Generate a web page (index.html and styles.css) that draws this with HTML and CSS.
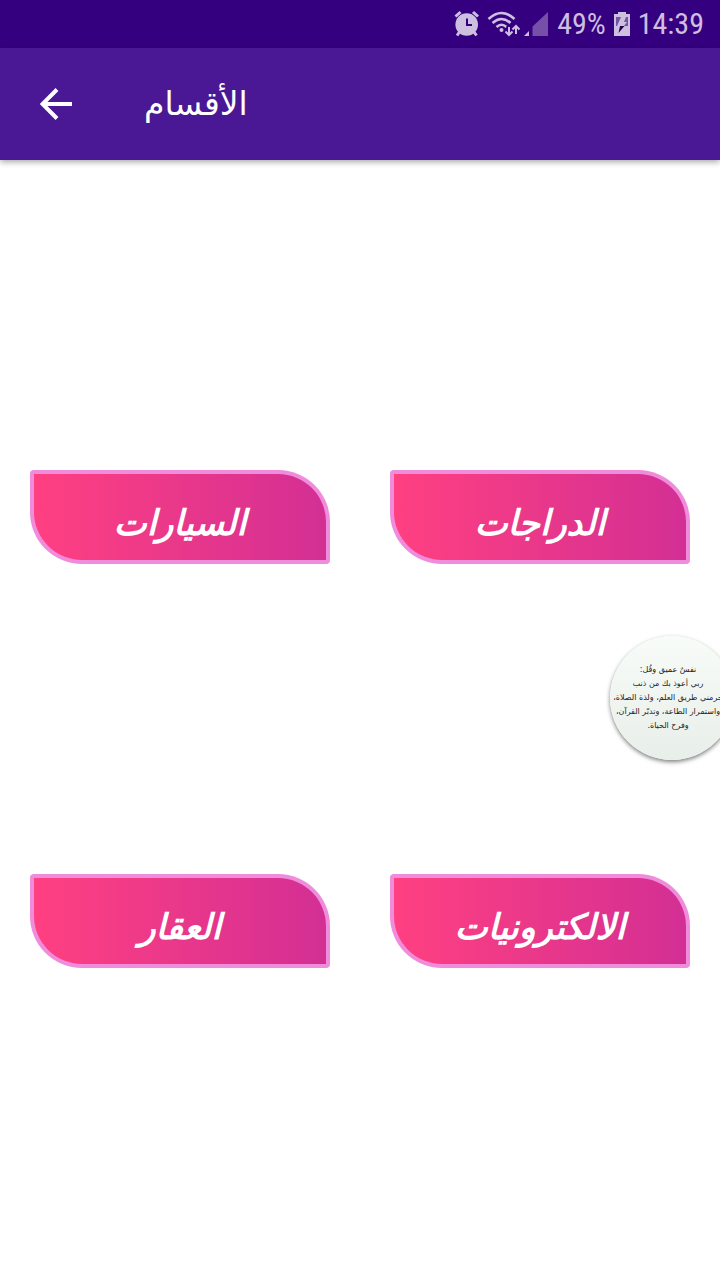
FILE: index.html
```html
<!DOCTYPE html>
<html lang="ar">
<head>
<meta charset="utf-8">
<meta name="viewport" content="width=device-width, initial-scale=1">
<title>الأقسام</title>
<link rel="stylesheet" href="styles.css">
</head>
<body>
<div class="status">
  <svg class="status-icons" width="96" height="28" viewBox="0 0 96 28" aria-hidden="true">
    <g fill="none" stroke="#cdbfe0">
      <path stroke-width="3" d="M2.500 6.500 7.500 2M25 6.500 20 2M6.500 22 4 25.500M21 22l2.500 3.500"/>
      <path stroke-width="2.600" d="M35.500 9Q48.500-3 61.500 9M39.500 13Q48.500 5 57.500 13M43.500 17Q48.500 12.500 53.500 17"/>
    </g>
    <path d="M56 16v9M63 16v9" stroke="#350080" stroke-width="5"/>
    <path d="M56 17v8M52.500 21.500 56 25l3.500-3.500M63 24v-8M59.500 19.500 63 16l3.500 3.500" fill="none" stroke="#cdbfe0" stroke-width="2"/>
    <circle cx="13.700" cy="14.500" r="11.300" fill="#cdbfe0"/>
    <path d="M14 8.500V15h5" fill="none" stroke="#350080" stroke-width="2"/>
    <circle cx="48.500" cy="20" r="2" fill="#cdbfe0"/>
    <path d="M76 21v5h-5z" fill="#cdbfe0"/>
    <path d="M95 2v24H79.500V16.500z" fill="#7650a8"/>
  </svg>
  <span class="reading">49%</span>
  <svg class="battery" width="16" height="24" viewBox="0 0 16 24" aria-hidden="true">
    <path d="M4 0h8v2h4v22H0V2h4z" fill="#cdbfe0"/>
    <path d="M2 5h12v9H2z" fill="#7650a8"/>
    <path d="M7 5h5l-2 5h3l-3 4H3z" fill="#cdbfe0"/>
    <path d="M6 14h4.500L4.500 21z" fill="#250052"/>
  </svg>
  <time class="reading">14:39</time>
</div>
<header class="bar">
  <button class="back" type="button" aria-label="رجوع">
    <svg width="32" height="32" viewBox="0 0 32 32" aria-hidden="true"><path d="M32 16H3M17 1.500 2.500 16 17 30.500" fill="none" stroke="#fff" stroke-width="4"/></svg>
  </button>
  <h1 class="title" dir="rtl">الأقسام</h1>
</header>
<main class="sections">
  <button class="section" type="button" dir="rtl">السيارات</button>
  <button class="section" type="button" dir="rtl">الدراجات</button>
  <button class="section" type="button" dir="rtl">العقار</button>
  <button class="section" type="button" dir="rtl">الالكترونيات</button>
</main>
<aside class="bubble">
  <p class="prayer" dir="rtl">نفسٌ عميق وقُل:<br>ربي أعوذ بك من ذنب<br>حرمني طريق العلم، ولذة الصلاة،<br>واستمرار الطاعة، وتدبّر القرآن،<br>وفرح الحياة.</p>
</aside>
</body>
</html>
```
FILE: styles.css
```css
* { box-sizing: border-box; }

body {
  margin: 0;
  min-height: 100vh;
  display: flex;
  flex-direction: column;
  overflow-x: hidden;
  background: #fff;
  font-family: "DejaVu Sans", sans-serif;
}

.status {
  height: 48px;
  padding: 0 16px;
  display: flex;
  align-items: center;
  justify-content: flex-end;
  gap: 8px;
  background: #350080;
  color: #cdbfe0;
}

.reading {
  font: 30px/48px "Roboto Condensed", "Liberation Sans Narrow", Roboto, sans-serif;
}

.bar {
  height: 112px;
  padding: 0 40px;
  display: flex;
  align-items: center;
  gap: 72px;
  background: #4a1894;
  color: #fff;
  box-shadow: 0 2px 6px rgba(0, 0, 0, 0.35);
}

.back {
  display: flex;
  padding: 0;
  border: 0;
  background: none;
}

.title {
  margin: 0;
  font-size: 33px;
  font-weight: 400;
  line-height: 48px;
}

.sections {
  flex: 1;
  padding: 0 30px 2px;
  display: grid;
  grid-template-columns: 1fr 1fr;
  column-gap: 60px;
  align-content: space-evenly;
}

.section {
  height: 94px;
  padding: 12px 0 0;
  border: 4px solid transparent;
  border-radius: 4px 52px 4px 52px;
  background:
    linear-gradient(90deg, #ff4081, #d32f94) padding-box,
    linear-gradient(#f08cdc, #f08cdc) border-box;
  color: #fff;
  font: italic bold 35px/48px "DejaVu Sans", sans-serif;
}

.bubble {
  position: absolute;
  top: 632px;
  right: 0;
  width: 114px;
  padding: 4px 0 8px 4px;
  overflow: hidden;
}

.prayer {
  width: 124px;
  height: 124px;
  margin: 0;
  padding: 27px 8px 0 0;
  border-radius: 50%;
  background: linear-gradient(#f8fcf8, #e8eee9);
  box-shadow: 0 2px 4px rgba(0, 0, 0, 0.5);
  color: #222;
  font: 8px/14px "DejaVu Sans", sans-serif;
  text-align: center;
  white-space: nowrap;
}
```
